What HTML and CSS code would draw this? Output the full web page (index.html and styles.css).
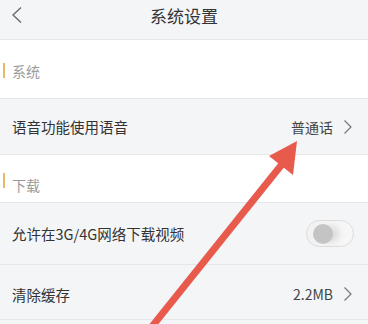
FILE: index.html
```html
<!DOCTYPE html>
<html lang="zh-CN">
<head>
    <meta charset="UTF-8">
    <meta name="viewport" content="width=device-width, initial-scale=1.0">
    <title>系统设置</title>
    <link rel="stylesheet" href="styles.css">
</head>
<body>
    <div class="page">
        <div class="header">
            <svg class="back" width="12" height="18" viewBox="0 0 12 18">
                <polyline points="10,1.5 2,9 10,16.5" fill="none" stroke="#666" stroke-width="1.3"/>
            </svg>
            <span class="title">系统设置</span>
        </div>

        <div class="section section-first"><span class="mark"></span>系统</div>

        <div class="row row-voice">
            <span class="label">语音功能使用语音</span>
            <span class="value">普通话
                <svg class="chevron" width="9" height="16" viewBox="0 0 9 16">
                    <polyline points="1.5,1.5 8,8 1.5,14.5" fill="none" stroke="#777" stroke-width="1.2"/>
                </svg>
            </span>
        </div>

        <div class="section section-second"><span class="mark"></span>下载</div>

        <div class="row row-net">
            <span class="label">允许在3G/4G网络下载视频</span>
            <span class="switch"><span class="knob"></span></span>
        </div>

        <div class="row row-cache">
            <span class="label">清除缓存</span>
            <span class="value">2.2MB
                <svg class="chevron" width="9" height="16" viewBox="0 0 9 16">
                    <polyline points="1.5,1.5 8,8 1.5,14.5" fill="none" stroke="#777" stroke-width="1.2"/>
                </svg>
            </span>
        </div>

        <!-- red annotation arrow drawn over the screenshot -->
        <svg class="arrow" width="368" height="324" viewBox="0 0 368 324">
            <line x1="146" y1="334" x2="283" y2="163" stroke="#e85a4c" stroke-width="7"/>
            <polygon points="297,141 269,156 293,175" fill="#e85a4c"/>
        </svg>
    </div>
</body>
</html>
```

FILE: styles.css
```css
body {
    margin: 0;
    font-family: "Noto Sans CJK SC", "Noto Sans", sans-serif;
    color: #333;
    background-color: #f4f5f7;
}
.page {
    position: relative;
    width: 368px;
    height: 324px;
    overflow: hidden;
    background-color: #f4f5f7;
}
.header {
    height: 40px;
    box-sizing: border-box;
    padding-top: 4px;
    border-bottom: 1px solid #e6e7e9;
    text-align: center;
    position: relative;
}
.back {
    position: absolute;
    left: 11px;
    top: 6px;
}
.title {
    font-size: 17px;
    line-height: 24px;
    color: #333;
}
.section {
    background: white;
    box-sizing: border-box;
    border-bottom: 1px solid #e6e7e9;
    padding-left: 12px;
    font-size: 14px;
    line-height: 20px;
    color: #9a9a9a;
    position: relative;
}
.section-first {
    height: 59px;
    padding-top: 21px;
}
.section-second {
    height: 48px;
    padding-top: 20px;
}
.mark {
    position: absolute;
    left: 3px;
    top: 50%;
    width: 2px;
    height: 15px;
    margin-top: -6px;
    background-color: #e6b86a;
}
.row {
    display: flex;
    align-items: center;
    justify-content: space-between;
    box-sizing: border-box;
    border-bottom: 1px solid #e6e7e9;
    padding: 0 16px 0 12px;
    font-size: 14.5px;
    color: #333;
}
.row-voice {
    height: 56px;
}
.row-net {
    height: 62px;
    padding-right: 14px;
}
.row-cache {
    height: 55px;
    padding-top: 4px;
}
.value {
    display: flex;
    align-items: center;
    gap: 10px;
    font-size: 14px;
    color: #444;
}
.switch {
    width: 48px;
    height: 27px;
    box-sizing: border-box;
    border: 1px solid #dcdcdc;
    border-radius: 14px;
    background: linear-gradient(to right, #f2f2f2, #f7f7f7);
    position: relative;
}
.knob {
    position: absolute;
    left: 6px;
    top: 2.5px;
    width: 20px;
    height: 20px;
    border-radius: 50%;
    background-color: #c4c4c4;
    box-shadow: 8px 0 6px -2px #dcdcdc;
}
.arrow {
    position: absolute;
    left: 0;
    top: 0;
}
```
